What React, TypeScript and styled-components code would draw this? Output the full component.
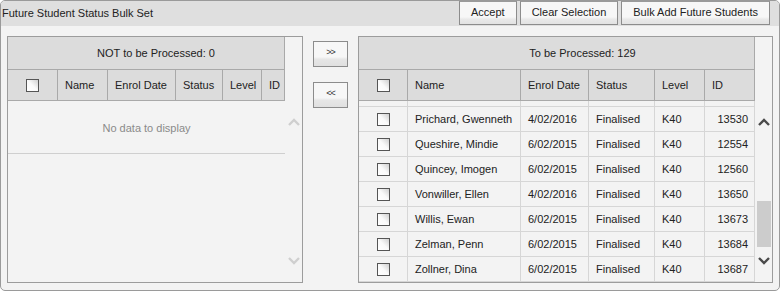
import React from 'react';
import styled, { createGlobalStyle } from 'styled-components';

const GlobalStyle = createGlobalStyle`
  html, body {
    margin: 0;
    padding: 0;
    background: #ffffff;
  }
  body {
    font-family: 'Liberation Sans', Arial, sans-serif;
    font-size: 11px;
    color: #222;
  }
  * {
    box-sizing: border-box;
  }
`;

type Student = {
    name: string;
    enrol: string;
    status: string;
    level: string;
    id: string;
};

const students: Student[] = [
    {name: 'Prichard, Gwenneth', enrol: '4/02/2016', status: 'Finalised', level: 'K40', id: '13530'},
    {name: 'Queshire, Mindie', enrol: '6/02/2015', status: 'Finalised', level: 'K40', id: '12554'},
    {name: 'Quincey, Imogen', enrol: '6/02/2015', status: 'Finalised', level: 'K40', id: '12560'},
    {name: 'Vonwiller, Ellen', enrol: '4/02/2016', status: 'Finalised', level: 'K40', id: '13650'},
    {name: 'Willis, Ewan', enrol: '6/02/2015', status: 'Finalised', level: 'K40', id: '13673'},
    {name: 'Zelman, Penn', enrol: '6/02/2015', status: 'Finalised', level: 'K40', id: '13684'},
    {name: 'Zollner, Dina', enrol: '6/02/2015', status: 'Finalised', level: 'K40', id: '13687'},
];

const LEFT_COLS = '50px 50px 68px 47px 39px 1fr';
const RIGHT_COLS = '49px 113px 68px 66px 50px 1fr';

const Chevron = ({up, color}: { up?: boolean; color: string }) => (
    <svg width="12" height="8" viewBox="0 0 12 8">
        <path d={up ? 'M1 7 L6 2 L11 7' : 'M1 1 L6 6 L11 1'}
              fill="none" stroke={color} strokeWidth="2.4"/>
    </svg>
);

const Header = ({cols}: { cols: string }) => (
    <HeaderRow $cols={cols}>
        <Cell $center><CheckBox/></Cell>
        <Cell>Name</Cell>
        <Cell>Enrol Date</Cell>
        <Cell>Status</Cell>
        <Cell>Level</Cell>
        <Cell>ID</Cell>
    </HeaderRow>
);

export default function App() {
    return (
        <>
            <GlobalStyle/>
            <Window>
                <TitleBar>
                    <Title>Future Student Status Bulk Set</Title>
                    <Toolbar>
                        <ToolButton>Accept</ToolButton>
                        <ToolButton>Clear Selection</ToolButton>
                        <ToolButton>Bulk Add Future Students</ToolButton>
                    </Toolbar>
                </TitleBar>
                <Body>
                    <Panel $width="296px">
                        <Grid>
                            <GridTitle $shift={20}>NOT to be Processed: 0</GridTitle>
                            <Header cols={LEFT_COLS}/>
                            <NoData>No data to display</NoData>
                        </Grid>
                        <ScrollBar>
                            <Chevron up color="#cfcfcf"/>
                            <Track/>
                            <Chevron color="#cfcfcf"/>
                        </ScrollBar>
                    </Panel>
                    <Mover>
                        <MoveButton>&gt;&gt;</MoveButton>
                        <MoveButton>&lt;&lt;</MoveButton>
                    </Mover>
                    <Panel>
                        <Grid>
                            <GridTitle $shift={52}>To be Processed: 129</GridTitle>
                            <Header cols={RIGHT_COLS}/>
                            <Rows>
                                <Row $cols={RIGHT_COLS} $height={6}>
                                    <Cell/><Cell/><Cell/><Cell/><Cell/><Cell/>
                                </Row>
                                {students.map(s => (
                                    <Row key={s.id} $cols={RIGHT_COLS}>
                                        <Cell $center><CheckBox/></Cell>
                                        <Cell>{s.name}</Cell>
                                        <Cell>{s.enrol}</Cell>
                                        <Cell>{s.status}</Cell>
                                        <Cell>{s.level}</Cell>
                                        <Cell $right>{s.id}</Cell>
                                    </Row>
                                ))}
                            </Rows>
                        </Grid>
                        <ScrollBar>
                            <Chevron up color="#4a4a4a"/>
                            <Track>
                                <Thumb $offset={74}/>
                            </Track>
                            <Chevron color="#4a4a4a"/>
                        </ScrollBar>
                    </Panel>
                </Body>
            </Window>
        </>
    );
}

const Window = styled.div`
  width: 780px;
  height: 291px;
  display: flex;
  flex-direction: column;
  border: 1px solid #9a9a9a;
  border-radius: 5px;
  background: #f3f3f3;
  overflow: hidden;
`

const TitleBar = styled.div`
  height: 25px;
  display: flex;
  align-items: flex-start;
  justify-content: space-between;
  background: #dfdfdf;
  padding-right: 9px;
`

const Title = styled.div`
  padding: 5px 0 0 1px;
  font-size: 11px;
  line-height: 14px;
  color: #222;
`

const Toolbar = styled.div`
  display: flex;
  gap: 3px;
`

const ToolButton = styled.button`
  height: 24px;
  padding: 0 11px 2px;
  border: 1px solid #8c8c8c;
  border-top-color: #9a9a9a;
  background: linear-gradient(to bottom, #f7f7f7 0%, #f7f7f7 68%, #e9e9e9 78%, #e2e2e2 100%);
  font-family: 'Liberation Sans', Arial, sans-serif;
  font-size: 11px;
  color: #222;
  cursor: pointer;
`

const Body = styled.div`
  flex: 1;
  display: flex;
  gap: 10px;
  padding: 10px 6px 7px 6px;
  min-height: 0;
`

const Panel = styled.div<{ $width?: string }>`
  ${p => p.$width ? `width: ${p.$width};` : 'flex: 1;'}
  display: flex;
  border: 1px solid #9c9c9c;
  background: #f3f3f3;
  min-width: 0;
`

const Grid = styled.div`
  flex: 1;
  display: flex;
  flex-direction: column;
  min-width: 0;
`

const GridTitle = styled.div<{ $shift: number }>`
  height: 33px;
  display: flex;
  align-items: center;
  justify-content: center;
  padding-left: ${p => p.$shift}px;
  padding-bottom: 1px;
  background: #dcdcdc;
  border-bottom: 1px solid #a9a9a9;
  border-right: 1px solid #a9a9a9;
  font-size: 11px;
  color: #222;
`

const HeaderRow = styled.div<{ $cols: string }>`
  height: 31px;
  display: grid;
  grid-template-columns: ${p => p.$cols};
  background: #dcdcdc;
  border-bottom: 1px solid #a9a9a9;

  & > div {
    border-right-color: #a9a9a9;
  }
`

const Cell = styled.div<{ $center?: boolean; $right?: boolean }>`
  display: flex;
  align-items: center;
  justify-content: ${p => p.$center ? 'center' : p.$right ? 'flex-end' : 'flex-start'};
  padding: ${p => p.$center ? '0' : p.$right ? '0 6px 0 0' : '0 0 0 7px'};
  border-right: 1px solid #d6d6d6;
  white-space: nowrap;
  overflow: hidden;
  font-size: 11px;
  color: #222;
`

const Rows = styled.div`
  flex: 1;
  overflow: hidden;
`

const Row = styled.div<{ $cols: string; $height?: number }>`
  height: ${p => p.$height ?? 25}px;
  display: grid;
  grid-template-columns: ${p => p.$cols};
  border-bottom: 1px solid #d6d6d6;
`

const NoData = styled.div`
  height: 53px;
  display: flex;
  align-items: center;
  justify-content: center;
  padding-top: 1px;
  border-bottom: 1px solid #cfcfcf;
  color: #8a8a8a;
  font-size: 11px;
`

const CheckBox = styled.span`
  display: block;
  width: 13px;
  height: 13px;
  border: 1px solid #555;
  background: linear-gradient(45deg, #ffffff 0%, #fafafa 50%, #cfcfcf 100%);
`

const ScrollBar = styled.div`
  width: 17px;
  flex: none;
  display: flex;
  flex-direction: column;
  align-items: center;
  padding: 81px 0 17px;
`

const Track = styled.div`
  flex: 1;
  width: 100%;
  padding-top: 1px;
`

const Thumb = styled.div<{ $offset: number }>`
  width: 14px;
  height: 46px;
  margin: ${p => p.$offset}px auto 0;
  background: #cccccc;
`

const Mover = styled.div`
  width: 35px;
  display: flex;
  flex-direction: column;
  gap: 15px;
  padding-top: 5px;
`

const MoveButton = styled.button`
  height: 26px;
  width: 35px;
  padding: 0 0 4px;
  border: 1px solid #8c8c8c;
  background: linear-gradient(to bottom, #f7f7f7 0%, #f7f7f7 62%, #e6e6e6 72%, #e0e0e0 100%);
  font-family: 'Liberation Sans', Arial, sans-serif;
  font-size: 9px;
  letter-spacing: -1px;
  color: #333;
  cursor: pointer;
`
